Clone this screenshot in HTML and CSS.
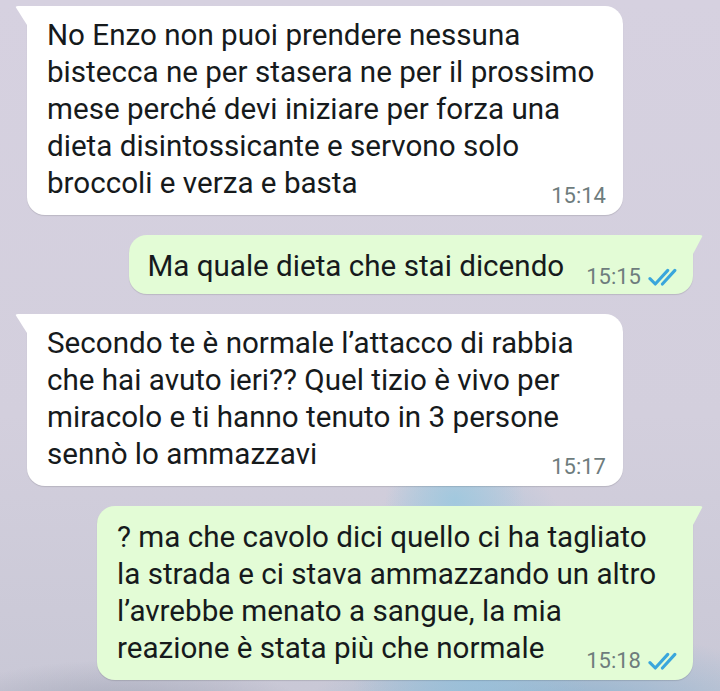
FILE: index.html
```html
<!DOCTYPE html>
<html lang="it">
<head>
  <meta charset="UTF-8">
  <title>Chat</title>
  <meta name="viewport" content="width=device-width, initial-scale=1.0">
  <link rel="stylesheet" href="styles.css">
</head>
<body>
  <div class="chat">
    <div class="bubble in">
      <div class="text">No Enzo non puoi prendere nessuna<br>bistecca ne per stasera ne per il prossimo<br>mese perché devi iniziare per forza una<br>dieta disintossicante e servono solo<br>broccoli e verza e basta</div>
      <div class="meta"><span class="time">15:14</span></div>
    </div>

    <div class="bubble out short">
      <div class="text">Ma quale dieta che stai dicendo</div>
      <div class="meta">
        <span class="time">15:15</span>
        <svg class="ticks" viewBox="0 0 25 16"><path d="M1.5 9 L6 13.5 L16.5 2 M12 13.5 L22.5 2"/></svg>
      </div>
    </div>

    <div class="bubble in">
      <div class="text">Secondo te è normale l’attacco di rabbia<br>che hai avuto ieri?? Quel tizio è vivo per<br>miracolo e ti hanno tenuto in 3 persone<br>sennò lo ammazzavi</div>
      <div class="meta"><span class="time">15:17</span></div>
    </div>

    <div class="bubble out">
      <div class="text">? ma che cavolo dici quello ci ha tagliato<br>la strada e ci stava ammazzando un altro<br>l’avrebbe menato a sangue, la mia<br>reazione è stata più che normale</div>
      <div class="meta">
        <span class="time">15:18</span>
        <svg class="ticks" viewBox="0 0 25 16"><path d="M1.5 9 L6 13.5 L16.5 2 M12 13.5 L22.5 2"/></svg>
      </div>
    </div>
  </div>
</body>
</html>
```

FILE: styles.css
```css
* {
  box-sizing: border-box;
}

body {
  margin: 0;
  height: 691px;
  overflow: hidden;
  font-family: Roboto, "Noto Sans", sans-serif;
  color: #161a1c;
  background:
    radial-gradient(ellipse 70px 60px at 455px 500px, rgba(160, 200, 222, 0.95), rgba(160, 200, 222, 0) 100%),
    radial-gradient(ellipse 120px 200px at 470px 640px, rgba(150, 192, 218, 0.95), rgba(150, 192, 218, 0) 100%),
    radial-gradient(ellipse 260px 90px at 560px 720px, rgba(130, 175, 205, 0.9), rgba(130, 175, 205, 0) 100%),
    radial-gradient(ellipse 200px 60px at 120px 720px, rgba(120, 130, 150, 0.5), rgba(120, 130, 150, 0) 100%),
    linear-gradient(180deg, #d6d1e0 0%, #d3cfdd 60%, #c9c8d6 100%);
}

.chat {
  display: flex;
  flex-direction: column;
  gap: 20px;
  padding: 6px 27px;
}

.bubble {
  position: relative;
  width: 596px;
  border-radius: 18px;
  padding: 11px 17px 7px 20px;
  box-shadow: 0 1px 1px rgba(0, 0, 0, 0.12);
}

.bubble.in {
  align-self: flex-start;
  background: #fff;
  border-top-left-radius: 0;
}

.bubble.out {
  align-self: flex-end;
  background: #e3fcd6;
  border-top-right-radius: 0;
  padding-top: 13px;
  padding-right: 15px;
}

/* the little tail at the top corner */
.bubble::before {
  content: "";
  position: absolute;
  top: 0;
  width: 12px;
  height: 19px;
  background: inherit;
}

.bubble.in::before {
  left: -12px;
  clip-path: polygon(0 0, 100% 0, 100% 100%);
  border-top-left-radius: 3px;
}

.bubble.out::before {
  right: -10px;
  width: 10px;
  clip-path: polygon(0 0, 100% 0, 0 100%);
  border-top-right-radius: 3px;
}

.text {
  font-size: 29.6px;
  line-height: 37px;
}

.meta {
  display: flex;
  justify-content: flex-end;
  align-items: center;
  gap: 7px;
  margin-top: -18px;
  line-height: 24px;
}

.time {
  font-size: 22px;
  color: #6e7c7d;
}

.ticks {
  width: 30px;
  height: 19px;
  fill: none;
  stroke: #3aa6dc;
  stroke-width: 2.6;
  stroke-linecap: round;
  stroke-linejoin: round;
}

.bubble.short {
  width: auto;
  display: flex;
  align-items: flex-end;
  gap: 22px;
  padding: 13px 15px 9px 18px;
}

.bubble.short .meta {
  margin-top: 0;
  margin-bottom: -4px;
}
```
